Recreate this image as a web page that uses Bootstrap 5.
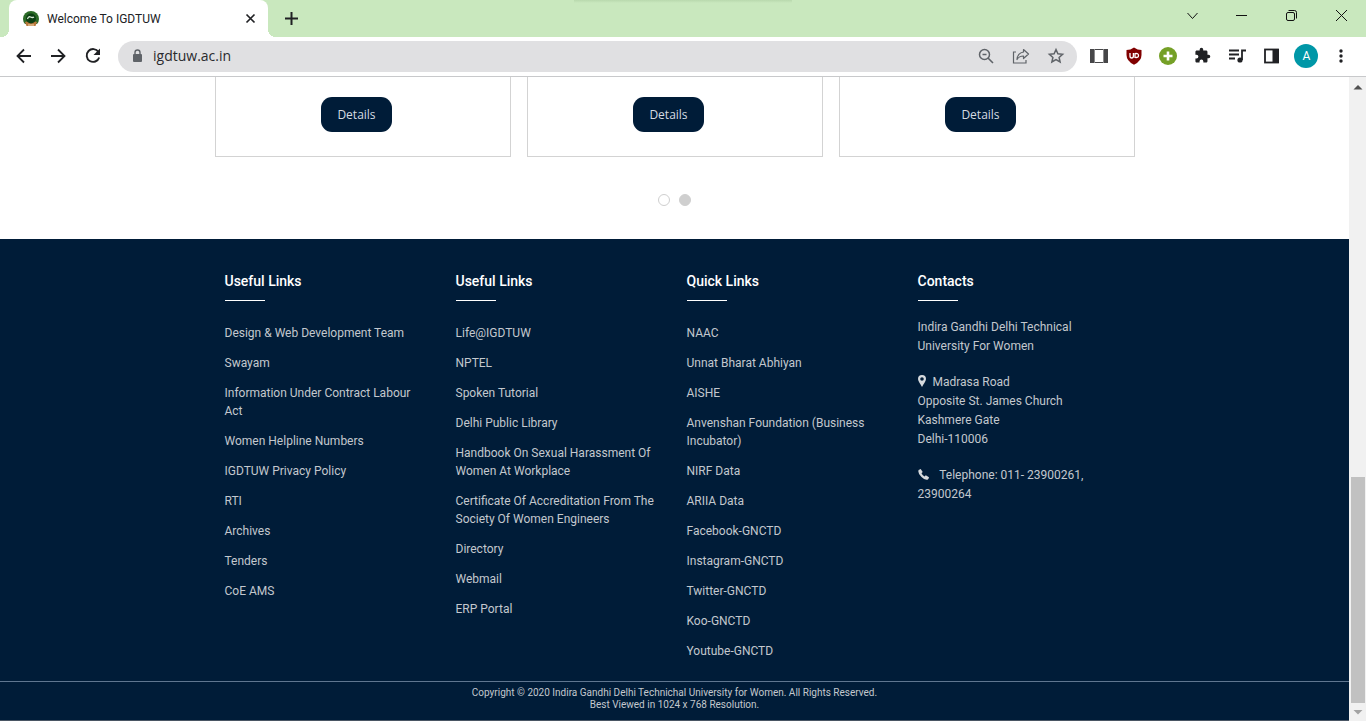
<!DOCTYPE html>
<html lang="en">
<head>
<meta charset="utf-8">
<meta name="viewport" content="width=device-width, initial-scale=1">
<title>Welcome To IGDTUW</title>
<link href="https://cdn.jsdelivr.net/npm/bootstrap@5.3.0/dist/css/bootstrap.min.css" rel="stylesheet">
<style>
  :root { --navy: #001c38; --soft: #c3c8ce; }
  body { font-family: Roboto, "Liberation Sans", sans-serif; font-size: 12px; line-height: 18px; color: #202124; background: #fff; }
  svg { display: block; flex: none; }
  .plain-btn { border: 0; background: none; padding: 0; color: inherit; display: block; flex: none; }

  /* browser chrome */
  .tab-strip { height: 37px; background: #c9e8be; position: relative; padding-left: 9px; }
  .window-shade { position: absolute; top: 0; left: 42%; width: 16%; height: 3px; background: linear-gradient(#b9d9ae, #c9e8be); }
  .page-tab { width: 259px; background: #fff; border-radius: 8px 8px 0 0; padding: 0 12px 0 14px; position: relative; }
  .page-tab::before, .page-tab::after { content: ""; position: absolute; bottom: 0; width: 8px; height: 8px; }
  .page-tab::before { left: -8px; background: radial-gradient(circle at 0 0, transparent 8px, #fff 8px); }
  .page-tab::after { right: -8px; background: radial-gradient(circle at 100% 0, transparent 8px, #fff 8px); }
  .window-buttons { gap: 34px; padding: 0 17px 6px 0; }
  .tool-row { height: 40px; border-bottom: 1px solid #c8c9cb; padding: 0 16px 2px 15px; gap: 17px; }
  .address-bar { height: 31px; background: #e0e0e2; border-radius: 16px; padding: 0 12px 0 13px; gap: 17px; margin: 1px -4px 0 -2px; color: #5f6368; }
  .address-bar input { border: 0; background: none; outline: 0; padding: 0; margin-left: -8px; font: 14px/20px "Open Sans", sans-serif; color: #2a2b2e; }
  .extension-icons { width: 260px; }
  .extension-icons .plain-btn { width: 18px; display: flex; justify-content: center; }
  .extension-icons .avatar { width: 24px; height: 24px; margin: 0 -3px; border-radius: 50%; background: #0097a7; color: #fff; line-height: 24px; }

  /* page */
  .detail-cards { max-width: 920px; gap: 16px; }
  .detail-card { border: 1px solid #d3d3d3; border-top: 0; padding: 20px 12px 24px 0; }
  .btn-details { --bs-btn-color: #d5dbe2; --bs-btn-bg: var(--navy); --bs-btn-hover-color: #fff; --bs-btn-hover-bg: #0b3158; --bs-btn-border-width: 0; --bs-btn-font-size: 12px; --bs-btn-line-height: 19px; --bs-btn-padding-x: 16px; --bs-btn-padding-y: 8px; --bs-btn-border-radius: 11px; --bs-btn-font-family: "Open Sans", sans-serif; }
  .pager { gap: 9px; padding: 37px 0 33px; }
  .pager button { width: 12px; height: 12px; border-radius: 50%; border: 1px solid #cfcfcf; background: #fff; padding: 0; }
  .pager button.active { background: #cfcfcf; }

  .site-footer { background: var(--navy); color: var(--soft); }
  .site-footer a { color: inherit; text-decoration: none; }
  .footer-cols { max-width: 924px; padding: 32px 0 21px; }
  .footer-cols h2 { font-size: 14px; line-height: 20px; font-weight: 500; color: #fff; margin: 0; padding-bottom: 9px; }
  .footer-cols h2::after { content: ""; display: block; width: 40px; height: 1px; background: #fff; position: absolute; margin-top: 9px; }
  .footer-col { padding: 0 12px; }
  .link-list { gap: 12px; padding-top: 24px; }
  address { gap: 17px; line-height: 19px; padding-top: 18px; }
  address svg { display: inline-block; vertical-align: -1px; }
  .copyright { border-top: 1px solid #5f7690; font-size: 10px; line-height: 12px; padding: 5px 0 9px; border-bottom: 1px solid #4a5664; }

  .scroll-track { width: 17px; background: #f1f1f1; padding: 4px 1px; flex: none; }
  .scroll-thumb { background: #c1c1c1; width: 14px; flex: 226 0 0; }
  .scroll-space { flex: 384 0 0; }
</style>
</head>
<body>
<div class="d-flex flex-column min-vh-100">

  <header>
    <div class="tab-strip d-flex">
      <div class="window-shade"></div>
      <div class="page-tab d-flex align-items-center">
        <svg width="16" height="16" viewBox="0 0 16 16"><path d="M2 13Q0 11 0 8a8 8 0 0 1 16 0q0 3-2 5z" fill="#2b6a26"/><path d="M2 11Q8 9 14 11L12.500 15H3.500Z" fill="#b9793d"/><path d="M5 14h6" stroke="#f3d9b0"/><circle cx="8" cy="7.500" r="5" fill="#0d3f14"/><path d="M4.500 8q1-3 3-2t3.500 0" stroke="#dcebd8" fill="none" stroke-width="1.300"/></svg>
        <span class="flex-grow-1 ms-2">Welcome To IGDTUW</span>
        <button class="plain-btn" aria-label="Close tab"><svg width="11" height="11" viewBox="0 0 11 11"><path d="M1.500 1.500l8 8m0-8l-8 8" stroke="#202124" stroke-width="1.700"/></svg></button>
      </div>
      <button class="plain-btn ms-3" aria-label="New tab"><svg width="15" height="15" viewBox="0 0 15 15"><path d="M7.500 1v13M1 7.500h13" stroke="#202124" stroke-width="2"/></svg></button>
      <div class="window-buttons d-flex align-items-center ms-auto">
        <button class="plain-btn" aria-label="Search tabs"><svg width="13" height="13" viewBox="0 0 13 13"><path d="M1.500 4l5 5.500 5-5.500" fill="none" stroke="#111"/></svg></button>
        <button class="plain-btn" aria-label="Minimize"><svg width="16" height="13" viewBox="0 0 16 13"><path d="M3 6.500h11" stroke="#111"/></svg></button>
        <button class="plain-btn" aria-label="Restore"><svg width="16" height="13" viewBox="0 0 16 13"><rect x="3.500" y="3.500" width="8" height="8" rx="1.500" fill="none" stroke="#111"/><path d="M5.500 1.500h6q2 0 2 2v6" fill="none" stroke="#111"/></svg></button>
        <button class="plain-btn" aria-label="Close"><svg width="16" height="13" viewBox="0 0 16 13"><path d="M3 1l11 11M14 1L3 12" stroke="#111"/></svg></button>
      </div>
    </div>

    <div class="tool-row d-flex align-items-center">
      <button class="plain-btn" aria-label="Back"><svg width="18" height="18" viewBox="0 0 18 18"><path d="M16 9H3M9 2.500L2.500 9 9 15.500" fill="none" stroke="#202124" stroke-width="1.800"/></svg></button>
      <button class="plain-btn" aria-label="Forward"><svg width="18" height="18" viewBox="0 0 18 18"><path d="M1 9h13M8 2.500L14.500 9 8 15.500" fill="none" stroke="#202124" stroke-width="1.800"/></svg></button>
      <button class="plain-btn" aria-label="Reload"><svg width="18" height="18" viewBox="0 0 18 18"><path d="M13.500 5A6.400 6.400 0 1 0 14.200 10.500" fill="none" stroke="#202124" stroke-width="1.900"/><path d="M15 1.500V8H8.500z" fill="#202124"/></svg></button>
      <div class="address-bar d-flex align-items-center flex-grow-1">
        <svg width="13" height="14" viewBox="0 0 13 14"><rect x="2" y="5" width="9" height="8" rx="1" fill="#5f6368"/><path d="M4 6V3.500a2.500 2.500 0 0 1 5 0V6" fill="none" stroke="#5f6368" stroke-width="1.400"/></svg>
        <input class="flex-grow-1" type="text" value="igdtuw.ac.in" aria-label="Address">
        <button class="plain-btn" aria-label="Zoom"><svg width="18" height="18" viewBox="0 0 18 18"><circle cx="7.500" cy="7.500" r="5" fill="none" stroke="#5f6368" stroke-width="1.500"/><path d="M5.500 7.500h4M11 11l5 5" stroke="#5f6368" stroke-width="1.600"/></svg></button>
        <button class="plain-btn" aria-label="Share"><svg width="18" height="18" viewBox="0 0 18 18"><path d="M4 5H1.500v11h12.500v-3" fill="none" stroke="#5f6368" stroke-width="1.200"/><path d="M11.500 2.500L16.500 7l-5 4.500V9Q7 9 5 12.500 5.500 6 11.500 5z" fill="none" stroke="#5f6368" stroke-width="1.200" stroke-linejoin="round"/></svg></button>
        <button class="plain-btn" aria-label="Bookmark"><svg width="18" height="18" viewBox="0 0 18 18"><path d="M9 2.500l1.900 4.300 4.700.5-3.500 3.100 1 4.600L9 12.600 4.900 15l1-4.600-3.500-3.100 4.700-.5z" fill="none" stroke="#5f6368" stroke-width="1.500"/></svg></button>
      </div>
      <div class="extension-icons d-flex align-items-center justify-content-between">
        <button class="plain-btn" aria-label="Reader extension"><svg width="18" height="18" viewBox="0 0 18 18"><rect x="0" y="2" width="18" height="14" fill="#464648"/><rect x="5" y="3" width="8" height="12" fill="#fff"/><path d="M4.500 2v14M13.500 2v14" stroke="#8a8a8c"/></svg></button>
        <button class="plain-btn" aria-label="Content blocker"><svg width="18" height="18" viewBox="0 0 18 18"><path d="M9 0.500Q12.500 3 16.500 3V8Q16.500 14 9 17.800 1.500 14 1.500 8V3Q5.500 3 9 .5z" fill="#800000"/><path d="M5 6v3q0 2 1.700 2T8.400 9V6" fill="none" stroke="#fff" stroke-width="1.300"/><path d="M10 6.600q3.500-.6 3.500 1.900T10 10.400z" fill="none" stroke="#fff" stroke-width="1.300"/></svg></button>
        <button class="plain-btn" aria-label="Add-on"><svg width="18" height="18" viewBox="0 0 18 18"><circle cx="9" cy="9" r="9" fill="#75a027"/><path d="M9 4.500v9M4.500 9h9" stroke="#fff" stroke-width="2.600"/></svg></button>
        <button class="plain-btn" aria-label="Extensions"><svg width="17" height="17" viewBox="0 0 24 24"><path d="M20.500 11H19V7c0-1.100-.9-2-2-2h-4V3.500a2.500 2.500 0 0 0-5 0V5H4c-1.100 0-2 .9-2 2v3.800h1.500a2.700 2.700 0 0 1 0 5.400H2V20c0 1.100.9 2 2 2h3.800v-1.500a2.700 2.700 0 0 1 5.400 0V22H17c1.100 0 2-.9 2-2v-4h1.500a2.500 2.500 0 0 0 0-5z" fill="#202124"/></svg></button>
        <button class="plain-btn" aria-label="Media"><svg width="18" height="18" viewBox="0 0 18 18"><path d="M1 3.500h10M1 7.500h10M1 11.500h6M14 13V3.500h4" stroke="#202124" stroke-width="1.800" fill="none"/><circle cx="12" cy="13" r="2.600" fill="#202124"/></svg></button>
        <button class="plain-btn" aria-label="Side panel"><svg width="17" height="18" viewBox="0 0 17 18"><rect x="2" y="2.500" width="13" height="13" fill="#fff" stroke="#202124" stroke-width="1.800"/><rect x="9.500" y="2" width="6.500" height="14" fill="#202124"/></svg></button>
        <button class="plain-btn avatar" aria-label="Profile">A</button>
        <button class="plain-btn" aria-label="Menu"><svg width="4" height="16" viewBox="0 0 4 16"><g fill="#202124"><circle cx="2" cy="3" r="1.700"/><circle cx="2" cy="8" r="1.700"/><circle cx="2" cy="13" r="1.700"/></g></svg></button>
      </div>
    </div>
  </header>

  <div class="d-flex flex-grow-1">
    <div class="flex-grow-1 d-flex flex-column">
      <main>
        <div class="detail-cards d-flex mx-auto">
          <div class="detail-card flex-fill text-center"><button class="btn btn-details">Details</button></div>
          <div class="detail-card flex-fill text-center"><button class="btn btn-details">Details</button></div>
          <div class="detail-card flex-fill text-center"><button class="btn btn-details">Details</button></div>
        </div>
        <div class="pager d-flex justify-content-center">
          <button aria-label="Slide 1"></button>
          <button class="active" aria-label="Slide 2"></button>
        </div>
      </main>

      <footer class="site-footer flex-grow-1 d-flex flex-column">
        <div class="footer-cols container-fluid flex-grow-1">
          <div class="row g-0">
            <div class="col-3 footer-col">
              <h2>Useful Links</h2>
              <ul class="link-list list-unstyled d-flex flex-column mb-0">
                <li><a href="#">Design &amp; Web Development Team</a></li>
                <li><a href="#">Swayam</a></li>
                <li><a href="#">Information Under Contract Labour<br>Act</a></li>
                <li><a href="#">Women Helpline Numbers</a></li>
                <li><a href="#">IGDTUW Privacy Policy</a></li>
                <li><a href="#">RTI</a></li>
                <li><a href="#">Archives</a></li>
                <li><a href="#">Tenders</a></li>
                <li><a href="#">CoE AMS</a></li>
              </ul>
            </div>
            <div class="col-3 footer-col">
              <h2>Useful Links</h2>
              <ul class="link-list list-unstyled d-flex flex-column mb-0">
                <li><a href="#">Life@IGDTUW</a></li>
                <li><a href="#">NPTEL</a></li>
                <li><a href="#">Spoken Tutorial</a></li>
                <li><a href="#">Delhi Public Library</a></li>
                <li><a href="#">Handbook On Sexual Harassment Of<br>Women At Workplace</a></li>
                <li><a href="#">Certificate Of Accreditation From The<br>Society Of Women Engineers</a></li>
                <li><a href="#">Directory</a></li>
                <li><a href="#">Webmail</a></li>
                <li><a href="#">ERP Portal</a></li>
              </ul>
            </div>
            <div class="col-3 footer-col">
              <h2>Quick Links</h2>
              <ul class="link-list list-unstyled d-flex flex-column mb-0">
                <li><a href="#">NAAC</a></li>
                <li><a href="#">Unnat Bharat Abhiyan</a></li>
                <li><a href="#">AISHE</a></li>
                <li><a href="#">Anvenshan Foundation (Business<br>Incubator)</a></li>
                <li><a href="#">NIRF Data</a></li>
                <li><a href="#">ARIIA Data</a></li>
                <li><a href="#">Facebook-GNCTD</a></li>
                <li><a href="#">Instagram-GNCTD</a></li>
                <li><a href="#">Twitter-GNCTD</a></li>
                <li><a href="#">Koo-GNCTD</a></li>
                <li><a href="#">Youtube-GNCTD</a></li>
              </ul>
            </div>
            <div class="col-3 footer-col">
              <h2>Contacts</h2>
              <address class="d-flex flex-column mb-0">
                <div>Indira Gandhi Delhi Technical<br>University For Women</div>
                <div><svg class="me-1" width="8" height="12" viewBox="0 0 8 12"><path fill-rule="evenodd" d="M4 0a4 4 0 0 1 4 4c0 2-2.500 5-4 8C2.500 9 0 6 0 4a4 4 0 0 1 4-4zm0 2.200a1.800 1.800 0 1 0 0 3.600 1.800 1.800 0 0 0 0-3.600z" fill="#d5d9dd"/></svg> Madrasa Road<br>Opposite St. James Church<br>Kashmere Gate<br>Delhi-110006</div>
                <div><svg class="me-2" width="11" height="11" viewBox="0 0 11 11"><path d="M.6 1L2.700 0l2 3-1.200 1.300q.8 1.900 3 3.100L7.800 6.200 11 8.200q-.2 1.800-1.500 2.500Q7 11.500 3.500 8 -.6 4 .6 1z" fill="#d5d9dd"/></svg> Telephone: 011- 23900261,<br>23900264</div>
              </address>
            </div>
          </div>
        </div>
        <div class="copyright text-center">Copyright © 2020 Indira Gandhi Delhi Technichal University for Women. All Rights Reserved.<br>Best Viewed in 1024 x 768 Resolution.</div>
      </footer>
    </div>

    <div class="scroll-track d-flex flex-column align-items-center" aria-hidden="true">
      <svg width="15" height="12" viewBox="0 0 15 12"><path d="M3.500 8.500L8 4l4.500 4.500z" fill="#505050"/></svg>
      <div class="scroll-space"></div>
      <div class="scroll-thumb"></div>
      <svg width="15" height="14" viewBox="0 0 15 14"><path d="M3.500 7L8 11.500 12.500 7z" fill="#a3a3a3"/></svg>
    </div>
  </div>
</div>
<script src="https://cdn.jsdelivr.net/npm/bootstrap@5.3.0/dist/js/bootstrap.bundle.min.js"></script>
</body>
</html>
